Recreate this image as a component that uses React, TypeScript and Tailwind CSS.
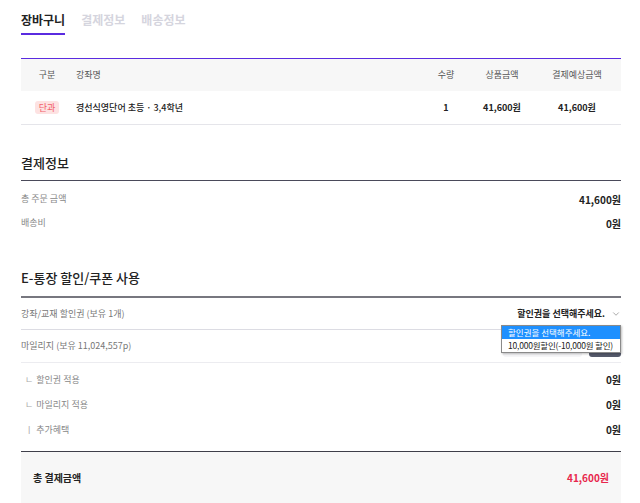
import { ChevronDown } from "lucide-react";

const font = { fontFamily: '"Noto Sans CJK KR", "Noto Sans", sans-serif' };

function SubRow({ label, prefix }: { label: string; prefix: string }) {
  return (
    <div className="flex items-center justify-between h-[25px]">
      <span className="text-[9px] text-[#888] pl-[4px]">
        <span className="text-[#aaa] mr-[3px]">{prefix}</span>
        {label}
      </span>
      <span className="text-[10px] font-bold text-[#222]">0원</span>
    </div>
  );
}

export default function App() {
  return (
    <div style={font} className="bg-white w-[640px] h-[503px] overflow-hidden">
      <div className="w-[600px] ml-[21px]">
        {/* Tabs */}
        <div className="flex items-end gap-[16px] pt-[9px] h-[35px]">
          <div className="flex flex-col">
            <span className="text-[12px] font-bold text-[#222] leading-[22px]">장바구니</span>
            <div className="h-[2px] bg-[#5a2be0] mt-[2px]" />
          </div>
          <span className="text-[12px] font-bold text-[#d5d5de] leading-[22px] mb-[4px]">결제정보</span>
          <span className="text-[12px] font-bold text-[#d5d5de] leading-[22px] mb-[4px]">배송정보</span>
        </div>

        {/* Cart table */}
        <div className="mt-[23px] border-t border-[#5a2be0]">
          <div className="flex items-center h-[32px] bg-[#f7f7f7] text-[9px] text-[#555]">
            <div className="w-[52px] text-center">구분</div>
            <div className="flex-1 pl-[3px]">강좌명</div>
            <div className="w-[50px] text-center">수량</div>
            <div className="w-[62px] text-center">상품금액</div>
            <div className="w-[88px] text-center">결제예상금액</div>
          </div>
          <div className="flex items-center h-[34px] border-b border-[#e5e5ea] text-[9px] text-[#222]">
            <div className="w-[52px] flex justify-center">
              <span className="bg-[#fde2e2] text-[#f2616b] rounded-[3px] px-[4px] leading-[13px]">단과</span>
            </div>
            <div className="flex-1 pl-[3px] font-medium">경선식영단어 초등 · 3,4학년</div>
            <div className="w-[50px] text-center font-bold">1</div>
            <div className="w-[62px] text-center font-bold">41,600원</div>
            <div className="w-[88px] text-center font-bold">41,600원</div>
          </div>
        </div>

        {/* 결제정보 */}
        <div className="mt-[28px] text-[13px] text-[#222] font-medium leading-[20px]">결제정보</div>
        <div className="mt-[7px] border-t border-[#4a4a5a]">
          <div className="flex items-center justify-between h-[26px] mt-[5px]">
            <span className="text-[9px] text-[#888]">총 주문 금액</span>
            <span className="text-[10px] font-bold text-[#222]">41,600원</span>
          </div>
          <div className="flex items-center justify-between h-[22px]">
            <span className="text-[9px] text-[#888]">배송비</span>
            <span className="text-[10px] font-bold text-[#222]">0원</span>
          </div>
        </div>

        {/* E-통장 */}
        <div className="mt-[34px] text-[13px] text-[#222] font-medium leading-[20px]">E-통장 할인/쿠폰 사용</div>
        <div className="mt-[8px] border-t-2 border-[#77777f]">
          <div className="relative flex items-center justify-between h-[32px] border-b border-[#dcdce3]">
            <span className="text-[9px] text-[#777]">강좌/교재 할인권 (보유 1개)</span>
            <span className="flex items-center gap-[6px] text-[9px] font-bold text-[#222]">
              할인권을 선택해주세요.
              <ChevronDown className="w-[10px] h-[10px] text-[#777]" strokeWidth={1.5} />
            </span>
            <div className="absolute right-0 top-[27px] w-[120px] bg-white border border-[#8a8a8a] shadow-[1px_1px_2px_rgba(0,0,0,0.25)] z-10 text-[8.5px] leading-[11px] whitespace-nowrap">
              <div className="bg-[#1e90ff] text-white px-[6px] py-[1px]">할인권을 선택해주세요.</div>
              <div className="text-[#222] px-[6px] py-[1px] tracking-[-0.2px]">10,000원할인(-10,000원 할인)</div>
            </div>
          </div>
          <div className="flex items-center justify-between h-[33px] border-b border-[#ececf0]">
            <span className="text-[9px] text-[#777]">마일리지 (보유 11,024,557p)</span>
            <div className="flex items-center gap-[7px]">
              <div className="w-[79px] h-[21px] bg-[#f5f5f7] rounded-[3px]" />
              <div className="w-[32px] h-[21px] bg-[#555a6b] rounded-[3px]" />
            </div>
          </div>
          <div className="pt-[4px]">
            <SubRow prefix="ㄴ" label="할인권 적용" />
            <SubRow prefix="ㄴ" label="마일리지 적용" />
            <SubRow prefix="ㅣ" label="추가혜택" />
          </div>
        </div>

        {/* Total */}
        <div className="mt-[9px] border-t border-[#3f3f4a] bg-[#f7f7f7] h-[52px] flex items-center justify-between px-[12px]">
          <span className="text-[10px] font-bold text-[#222]">총 결제금액</span>
          <span className="text-[10px] font-bold text-[#e8264c]">41,600원</span>
        </div>
      </div>
    </div>
  );
}
